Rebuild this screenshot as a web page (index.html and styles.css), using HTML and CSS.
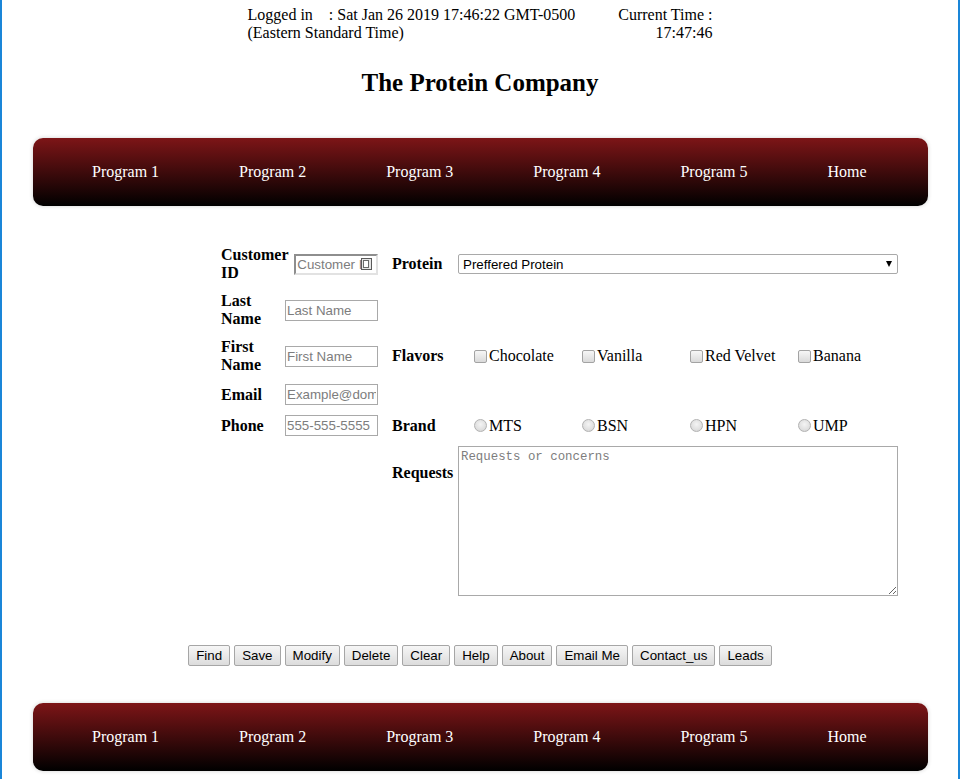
FILE: index.html
```html
<!DOCTYPE html>
<html lang="en">
<head>
<meta charset="utf-8">
<title>The Protein Company</title>
<link rel="stylesheet" href="styles.css">
</head>
<body>
<div class="frame">
  <div class="session">
    <div class="logged">Logged in&nbsp;&nbsp;&nbsp; : Sat Jan 26 2019 17:46:22 GMT-0500<br>(Eastern Standard Time)</div>
    <div class="clock">Current Time :<br>17:47:46</div>
  </div>

  <h1 class="title">The Protein Company</h1>

  <nav class="menu">
    <a href="#">Program 1</a>
    <a href="#">Program 2</a>
    <a href="#">Program 3</a>
    <a href="#">Program 4</a>
    <a href="#">Program 5</a>
    <a href="#">Home</a>
  </nav>

  <form class="customer-form">
    <div class="field">
      <label>Customer ID</label>
      <span class="spin-field">
        <input type="text" placeholder="Customer ID">
        <svg class="spin" width="11" height="12" viewBox="0 0 11 12"><rect x="0.5" y="0.5" width="10" height="11" fill="#e6e6e6" stroke="#5a5a5a"/><rect x="2.5" y="2.5" width="5" height="7" fill="#fff" stroke="#6a6a6a"/></svg>
      </span>
    </div>
    <div class="side-label">Protein</div>
    <div class="select-wrap">
      <select><option>Preffered Protein</option></select>
    </div>

    <div class="field">
      <label>Last Name</label>
      <input type="text" placeholder="Last Name">
    </div>

    <div class="field">
      <label>First Name</label>
      <input type="text" placeholder="First Name">
    </div>
    <div class="side-label">Flavors</div>
    <div class="options">
      <label><input type="checkbox">Chocolate</label>
      <label><input type="checkbox">Vanilla</label>
      <label><input type="checkbox">Red Velvet</label>
      <label><input type="checkbox">Banana</label>
    </div>

    <div class="field">
      <label>Email</label>
      <input type="text" placeholder="Example@domain.com">
    </div>

    <div class="field">
      <label>Phone</label>
      <input type="text" placeholder="555-555-5555">
    </div>
    <div class="side-label">Brand</div>
    <div class="options">
      <label><input type="radio" name="brand">MTS</label>
      <label><input type="radio" name="brand">BSN</label>
      <label><input type="radio" name="brand">HPN</label>
      <label><input type="radio" name="brand">UMP</label>
    </div>

    <div class="side-label top">Requests</div>
    <div class="control">
      <textarea placeholder="Requests or concerns"></textarea>
    </div>
  </form>

  <div class="actions">
    <button type="button">Find</button>
    <button type="button">Save</button>
    <button type="button">Modify</button>
    <button type="button">Delete</button>
    <button type="button">Clear</button>
    <button type="button">Help</button>
    <button type="button">About</button>
    <button type="button">Email Me</button>
    <button type="button">Contact_us</button>
    <button type="button">Leads</button>
  </div>

  <nav class="menu bottom">
    <a href="#">Program 1</a>
    <a href="#">Program 2</a>
    <a href="#">Program 3</a>
    <a href="#">Program 4</a>
    <a href="#">Program 5</a>
    <a href="#">Home</a>
  </nav>
</div>
</body>
</html>
```

FILE: styles.css
```css
html, body {
  margin: 0;
  padding: 0;
}

body {
  font-family: "Liberation Serif", "Times New Roman", serif;
  font-size: 16px;
  color: #000;
  background: #fff;
}

.frame {
  min-height: 100vh;
  box-sizing: border-box;
  border-left: 2px solid #1a86d8;
  border-right: 2px solid #1a86d8;
  padding-top: 6px;
  overflow: hidden;
}

.session {
  width: 465px;
  margin: 0 auto;
  display: flex;
  justify-content: space-between;
  line-height: 18px;
}

.clock {
  text-align: right;
}

.title {
  margin: 27px 0 0;
  font-size: 25px;
  line-height: 28px;
  font-weight: bold;
  text-align: center;
}

.menu {
  margin: 41px 30px 0 31px;
  height: 68px;
  display: flex;
  align-items: center;
  padding-left: 19px;
  border-radius: 10px;
  background: linear-gradient(#7d1517, #000);
  box-shadow: 0 0 4px rgba(0, 0, 0, 0.18);
}

.menu a {
  color: #fff;
  text-decoration: none;
  padding: 0 40px;
  line-height: 18px;
}

.menu.bottom {
  margin-top: 37px;
}

.customer-form {
  margin-top: 40px;
  padding-left: 219px;
  display: grid;
  grid-template-columns: 171px 66px 440px;
  grid-template-rows: 36px 36px 36px 21px 21px 150px;
  row-gap: 10px;
}

.field {
  grid-column: 1;
  width: 157px;
  display: flex;
  align-items: center;
  gap: 6px;
}

.field label {
  flex: 0 0 58px;
  font-weight: bold;
  line-height: 18px;
}

.field input,
.spin-field {
  flex: 1 1 0;
  min-width: 0;
  height: 21px;
  box-sizing: border-box;
}

.field input {
  border: 1px solid #a9a9a9;
  padding: 0 1px;
  font-family: "Liberation Sans", Arial, sans-serif;
  font-size: 13.333px;
  background: #fff;
  outline: none;
}

.spin-field {
  display: flex;
  align-items: center;
  border: 2px solid;
  border-color: #8e8e8e #e2e2e2 #e2e2e2 #8e8e8e;
  background: #fff;
  overflow: hidden;
}

.spin-field input {
  flex: 1 1 0;
  min-width: 0;
  height: 17px;
  border: none;
  padding: 0 0 0 1px;
}

.spin {
  flex: 0 0 11px;
  margin: 0 4px 0 -6px;
}

input::placeholder,
textarea::placeholder {
  color: #7d7d7d;
  opacity: 1;
}

.side-label {
  grid-column: 2;
  font-weight: bold;
  line-height: 18px;
  align-self: center;
}

.side-label.top {
  align-self: start;
  padding-top: 18px;
}

.select-wrap,
.options,
.control {
  grid-column: 3;
}

.select-wrap {
  position: relative;
  align-self: center;
  height: 20px;
}

.select-wrap select {
  appearance: none;
  -webkit-appearance: none;
  width: 440px;
  height: 20px;
  box-sizing: border-box;
  border: 1px solid #a9a9a9;
  border-radius: 2px;
  background: #fff;
  padding: 0 4px;
  font-family: "Liberation Sans", Arial, sans-serif;
  font-size: 13.333px;
  color: #000;
}

.select-wrap::after {
  content: "";
  position: absolute;
  right: 6px;
  top: 7px;
  border-left: 3px solid transparent;
  border-right: 3px solid transparent;
  border-top: 6px solid #000;
}

.options {
  display: grid;
  grid-template-columns: repeat(4, 108px);
  padding-left: 12px;
  align-items: center;
}

.options label {
  display: flex;
  align-items: center;
  line-height: 18px;
  white-space: nowrap;
}

.options input {
  appearance: none;
  -webkit-appearance: none;
  width: 13px;
  height: 13px;
  margin: 3px 2px 3px 4px;
  box-sizing: border-box;
  border: 1px solid #a3a3a3;
  background: linear-gradient(#f6f6f6, #dadada);
}

.options input[type="checkbox"] {
  border-radius: 2px;
}

.options input[type="radio"] {
  border-radius: 50%;
  border-color: #b2b2b2;
  background: radial-gradient(circle at 50% 40%, #f4f4f4 0, #e0e0e0 60%, #cfcfcf 100%);
}

.control textarea {
  display: block;
  width: 440px;
  height: 150px;
  box-sizing: border-box;
  margin: 0;
  border: 1px solid #a9a9a9;
  padding: 3px 2px 2px;
  font-family: "Liberation Mono", "Courier New", monospace;
  font-size: 12.4px;
  outline: none;
}

.actions {
  margin-top: 49px;
  display: flex;
  justify-content: center;
  gap: 4px;
}

.actions button {
  height: 21px;
  box-sizing: border-box;
  padding: 0 7px;
  margin: 0;
  border: 1px solid #a6a6a6;
  border-radius: 2px;
  background: linear-gradient(#f6f6f6, #dcdcdc);
  font-family: "Liberation Sans", Arial, sans-serif;
  font-size: 13.333px;
  color: #000;
}
```
